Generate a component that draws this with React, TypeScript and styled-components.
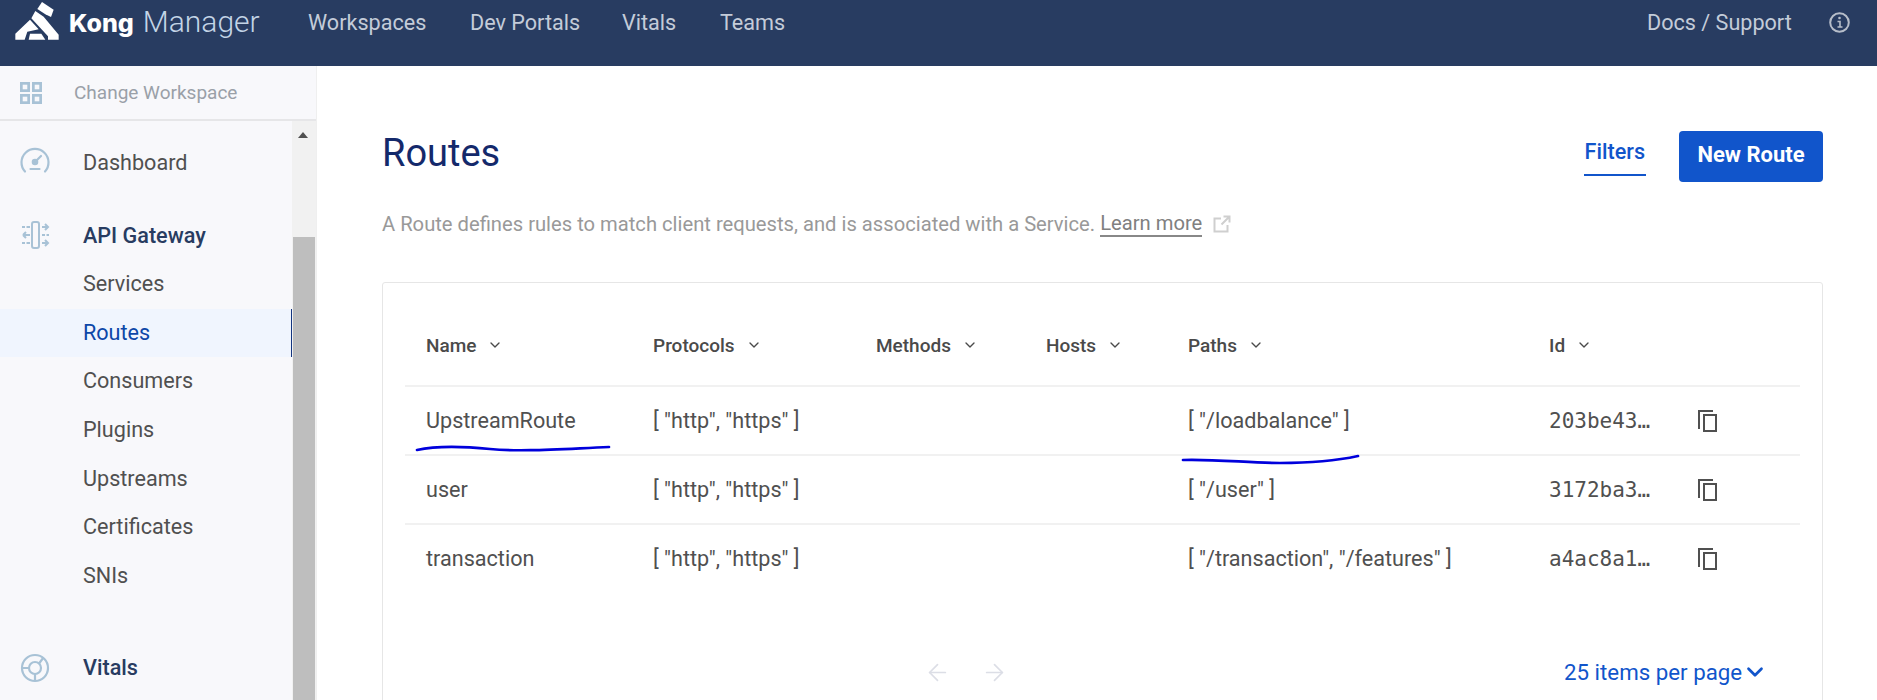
import React from "react";
import styled, { createGlobalStyle } from "styled-components";
import { ChevronDown, ArrowLeft, ArrowRight } from "lucide-react";

const GlobalStyle = createGlobalStyle`
  html, body { margin: 0; padding: 0; background: #fff; }
  body { font-family: Roboto, "Noto Sans", sans-serif; height: 700px; overflow: hidden; }
  * { box-sizing: border-box; }
`;

const Page = styled.div`
  position: relative;
  width: 1877px;
  height: 700px;
  overflow: hidden;
`;

const Header = styled.header`
  height: 66px;
  background: #283c61;
  display: flex;
  align-items: flex-start;
  padding: 2px 27px 0 15px;
`;

const Brand = styled.div`
  width: 293px;
  display: flex;
  align-items: center;
  gap: 10px;
  height: 38px;
`;

const BrandName = styled.span`
  font-family: Inter, Roboto, sans-serif;
  font-size: 25px;
  font-weight: 800;
  color: #fff;
`;

const BrandSuffix = styled.span`
  font-family: Roboto, sans-serif;
  font-size: 30px;
  font-weight: 300;
  color: #c3d4e6;
  margin-left: 9px;
`;

const TopLink = styled.a<{ $w?: number }>`
  font-size: 21.6px;
  line-height: 41px;
  color: #c4ccd9;
  width: ${(p) => p.$w || 0}px;
`;

const InfoWrap = styled.span`
  display: flex;
  margin-top: 10px;
  color: #b6bdc9;
`;

const Spacer = styled.div`
  flex: 1;
`;

const Body = styled.div`
  display: flex;
  height: 634px;
`;

const Side = styled.aside`
  width: 317px;
  background: #f8f8fb;
  border-right: 1px solid #efefef;
  display: flex;
  flex-direction: column;
`;

const Switch = styled.div`
  height: 55px;
  flex: none;
  display: flex;
  align-items: center;
  padding-left: 20px;
  gap: 32px;
  font-size: 19px;
  color: #9aa0a8;
  border-bottom: 2px solid #e6e6e8;
`;

const SideBody = styled.div`
  flex: 1;
  display: flex;
  min-height: 0;
`;

const SideNav = styled.nav`
  width: 292px;
  padding-top: 17px;
`;

const SubList = styled.div`
  margin-top: 1px;
`;

const Track = styled.div`
  position: relative;
  flex: 1;
  background: #f1f1f1;
`;

const Thumb = styled.div`
  position: absolute;
  left: 1px;
  right: 1px;
  top: 116px;
  bottom: 0;
  background: #bebebe;
`;

const UpArrow = styled.div`
  position: absolute;
  left: 6px;
  top: 11px;
  width: 0;
  height: 0;
  border-left: 5.5px solid transparent;
  border-right: 5.5px solid transparent;
  border-bottom: 6px solid #505050;
`;

const SectionRow = styled.div<{ $gap?: number }>`
  height: 48px;
  display: flex;
  align-items: center;
  gap: 33px;
  padding-left: 20px;
  margin-top: ${(p) => p.$gap || 0}px;
`;

const SectionIcon = styled.span`
  width: 30px;
  height: 30px;
  color: #a8c2d6;
  display: flex;
  align-items: center;
  justify-content: center;
`;

const SectionLabel = styled.span<{ $strong?: boolean }>`
  font-size: 21.6px;
  font-weight: ${(p) => (p.$strong ? 500 : 400)};
  color: ${(p) => (p.$strong ? "#283c61" : "#505050")};
`;

const SubLink = styled.a<{ $active?: boolean }>`
  display: block;
  height: 48.7px;
  line-height: 48.7px;
  padding-left: 83px;
  font-size: 21.6px;
  color: ${(p) => (p.$active ? "#0d47a8" : "#505050")};
  background: ${(p) => (p.$active ? "#f0f5fe" : "transparent")};
  border-right: ${(p) => (p.$active ? "1px solid #14357f" : "none")};
`;

const Main = styled.main`
  flex: 1;
  padding: 61px 54px 0 65px;
`;

const TitleRow = styled.div`
  display: flex;
  align-items: flex-start;
  justify-content: space-between;
`;

const Title = styled.h1`
  margin: 0;
  font-size: 38px;
  font-weight: 400;
  line-height: 52px;
  color: #14296b;
`;

const Actions = styled.div`
  display: flex;
  align-items: flex-start;
  gap: 33px;
  margin-top: 4px;
`;

const FilterLink = styled.a`
  font-size: 21.6px;
  font-weight: 500;
  line-height: 34px;
  height: 45px;
  padding: 4px 1px 0;
  color: #1155cb;
  border-bottom: 2px solid #1155cb;
`;

const PrimaryButton = styled.button`
  width: 144px;
  height: 51px;
  border: 0;
  border-radius: 4px;
  padding: 0 0 5px;
  background: #1155cb;
  color: #fff;
  font-family: inherit;
  font-size: 22px;
  font-weight: 700;
`;

const Lead = styled.p`
  margin: 29px 0 0;
  font-size: 20.2px;
  line-height: 26px;
  color: #999;
  display: flex;
  align-items: center;
  gap: 5px;
`;

const LearnMore = styled.a`
  color: #808080;
  border-bottom: 2px solid #888;
  line-height: 24px;
  margin-right: 6px;
`;

const ExternalWrap = styled.span`
  display: flex;
  color: #cfcfcf;
`;

const Card = styled.section`
  margin-top: 45px;
  height: 440px;
  padding: 22px 22px 0;
  border: 1px solid #e6e6e6;
  border-radius: 3px;
`;

const Row = styled.div<{ $head?: boolean; $plain?: boolean }>`
  display: grid;
  grid-template-columns: 227px 223px 170px 142px 361px 149px 1fr;
  align-items: center;
  height: ${(p) => (p.$head ? 82 : 69)}px;
  padding-left: 21px;
  border-bottom: 2px solid ${(p) => (p.$plain ? "transparent" : "#f1f1f1")};
  font-size: 21.6px;
  color: #505050;
`;

const HeadCell = styled.span`
  display: flex;
  align-items: center;
  gap: 11px;
  font-size: 19px;
  font-weight: 500;
  color: #4a4a4a;
`;

const IdCell = styled.span`
  font-family: "DejaVu Sans Mono", monospace;
  font-size: 21px;
  color: #505050;
`;

const CopyButton = styled.span`
  display: flex;
  color: #505050;
`;

const Pager = styled.div`
  display: flex;
  align-items: center;
  height: 70px;
  margin-top: 43px;
`;

const PagerArrows = styled.div`
  margin-left: 519px;
  width: 640px;
  display: flex;
  gap: 30px;
  color: #dcdee6;
`;

const PerPage = styled.a`
  display: flex;
  align-items: center;
  gap: 0;
  font-size: 22.3px;
  color: #1155cb;
`;

const Ink = styled.svg`
  position: absolute;
  left: 0;
  top: 0;
  pointer-events: none;
`;

const KongLogo = () => (
  <svg width="44" height="38" viewBox="20 5 130 114" fill="#fff">
    <path d="M100 5 135 28 127 50 110 42 86 26Z" />
    <path d="M80 32 105 49 150 103 150 118 118 118 118 108 68 54Z" />
    <path d="M64 58 90 87 56 94 48 118 20 118 20 100Z" />
    <path d="M64 100 98 100 110 118 60 118Z" />
  </svg>
);

const GridIcon = () => (
  <svg width="22" height="22" viewBox="0 0 22 22" fill="none" stroke="#a8c2d6" strokeWidth="2.7">
    <rect x="1.350" y="1.350" width="7.300" height="7.300" />
    <rect x="13.350" y="1.350" width="7.300" height="7.300" />
    <rect x="1.350" y="13.350" width="7.300" height="7.300" />
    <rect x="13.350" y="13.350" width="7.300" height="7.300" />
  </svg>
);

const GaugeIcon = () => (
  <svg width="30" height="30" viewBox="0 0 30 30" fill="none" stroke="currentColor" strokeWidth="2.2" strokeLinecap="round">
    <path d="M5 24.500A13.500 13.500 0 1 1 25 24.500" />
    <path d="M15 15l6-6M10.500 22h9" />
    <circle cx="15" cy="15" r="2.200" fill="currentColor" />
  </svg>
);

const GatewayIcon = () => (
  <svg width="29" height="29" viewBox="0 0 29 29" fill="none" stroke="currentColor" strokeWidth="2">
    <rect x="11" y="1" width="7" height="26" rx="2" />
    <path d="M1 6h3M5.500 6h3.500M21 6h6M24 3l3 3-3 3M2 14h7M2 14l3-3M2 14l3 3M21 14h3M25.500 14h2.500M1 22h3M5.500 22h3.500M21 22h6M24 19l3 3-3 3" />
  </svg>
);

const VitalsIcon = () => (
  <svg width="30" height="30" viewBox="0 0 30 30" fill="none" stroke="currentColor" strokeWidth="2.2">
    <circle cx="15" cy="15" r="13" />
    <circle cx="15" cy="15" r="6" />
    <path d="M2 15h7M15 21v7M19 10.500l4.500-6" />
  </svg>
);

const InfoIcon = () => (
  <svg width="21" height="21" viewBox="0 0 21 21" fill="none" stroke="currentColor" strokeWidth="2">
    <circle cx="10.500" cy="10.500" r="9.300" />
    <path d="M8.500 9.500h2.500v5M8.500 15h5" strokeWidth="1.600" />
    <circle cx="10.500" cy="6" r="1.300" fill="currentColor" stroke="none" />
  </svg>
);

const ExternalIcon = () => (
  <svg width="18" height="18" viewBox="0 0 18 18" fill="none" stroke="currentColor" strokeWidth="2">
    <path d="M8 3.500H1.500v13h13V10M10.500 1.500h6v6M16.500 1.500L8.500 9.500" />
  </svg>
);

const CopyIcon = () => (
  <svg width="19" height="22" viewBox="0 0 19 22" fill="none" stroke="currentColor" strokeWidth="2">
    <path d="M1 19V1h14" />
    <rect x="6" y="5" width="12" height="16" />
  </svg>
);

export default function App() {
  const subLinks = ["Services", "Routes", "Consumers", "Plugins", "Upstreams", "Certificates", "SNIs"];
  const rows = [
    { name: "UpstreamRoute", paths: '[ "/loadbalance" ]', id: "203be43" },
    { name: "user", paths: '[ "/user" ]', id: "3172ba3" },
    { name: "transaction", paths: '[ "/transaction", "/features" ]', id: "a4ac8a1" },
  ];
  const columns = ["Name", "Protocols", "Methods", "Hosts", "Paths", "Id"];

  return (
    <Page>
      <GlobalStyle />
      <Header>
        <Brand>
          <KongLogo />
          <BrandName>
            Kong<BrandSuffix>Manager</BrandSuffix>
          </BrandName>
        </Brand>
        <TopLink $w={162}>Workspaces</TopLink>
        <TopLink $w={152}>Dev Portals</TopLink>
        <TopLink $w={98}>Vitals</TopLink>
        <TopLink $w={80}>Teams</TopLink>
        <Spacer />
        <TopLink $w={182}>Docs / Support</TopLink>
        <InfoWrap>
          <InfoIcon />
        </InfoWrap>
      </Header>
      <Body>
        <Side>
          <Switch>
            <GridIcon />
            Change Workspace
          </Switch>
          <SideBody>
            <SideNav>
              <SectionRow>
                <SectionIcon>
                  <GaugeIcon />
                </SectionIcon>
                <SectionLabel>Dashboard</SectionLabel>
              </SectionRow>
              <SectionRow $gap={25}>
                <SectionIcon>
                  <GatewayIcon />
                </SectionIcon>
                <SectionLabel $strong>API Gateway</SectionLabel>
              </SectionRow>
              <SubList>
                {subLinks.map((l) => (
                  <SubLink key={l} $active={l === "Routes"}>
                    {l}
                  </SubLink>
                ))}
              </SubList>
              <SectionRow $gap={43}>
                <SectionIcon>
                  <VitalsIcon />
                </SectionIcon>
                <SectionLabel $strong>Vitals</SectionLabel>
              </SectionRow>
            </SideNav>
            <Track>
              <UpArrow />
              <Thumb />
            </Track>
          </SideBody>
        </Side>
        <Main>
          <TitleRow>
            <Title>Routes</Title>
            <Actions>
              <FilterLink>Filters</FilterLink>
              <PrimaryButton>New Route</PrimaryButton>
            </Actions>
          </TitleRow>
          <Lead>
            A Route defines rules to match client requests, and is associated with a Service.
            <LearnMore>Learn more</LearnMore>
            <ExternalWrap>
              <ExternalIcon />
            </ExternalWrap>
          </Lead>
          <Card>
            <Row $head>
              {columns.map((c) => (
                <HeadCell key={c}>
                  {c}
                  <ChevronDown size={16} />
                </HeadCell>
              ))}
            </Row>
            {rows.map((r, i) => (
              <Row key={r.id} $plain={i === rows.length - 1}>
                <span>{r.name}</span>
                <span>[ "http", "https" ]</span>
                <span />
                <span />
                <span>{r.paths}</span>
                <IdCell>{r.id}…</IdCell>
                <CopyButton>
                  <CopyIcon />
                </CopyButton>
              </Row>
            ))}
            <Pager>
              <PagerArrows>
                <ArrowLeft size={27} strokeWidth={1.5} />
                <ArrowRight size={27} strokeWidth={1.5} />
              </PagerArrows>
              <PerPage>
                25 items per page
                <ChevronDown size={26} strokeWidth={2.5} />
              </PerPage>
            </Pager>
          </Card>
        </Main>
      </Body>
      <Ink width="1877" height="700" fill="none" stroke="#0000dc" strokeWidth="2.700" strokeLinecap="round">
        <path d="M417 450C435 446 460 446 490 449S560 449 609 447" />
        <path d="M1183 460C1215 459 1250 463 1280 463 1310 463 1335 461 1358 456" />
      </Ink>
    </Page>
  );
}
